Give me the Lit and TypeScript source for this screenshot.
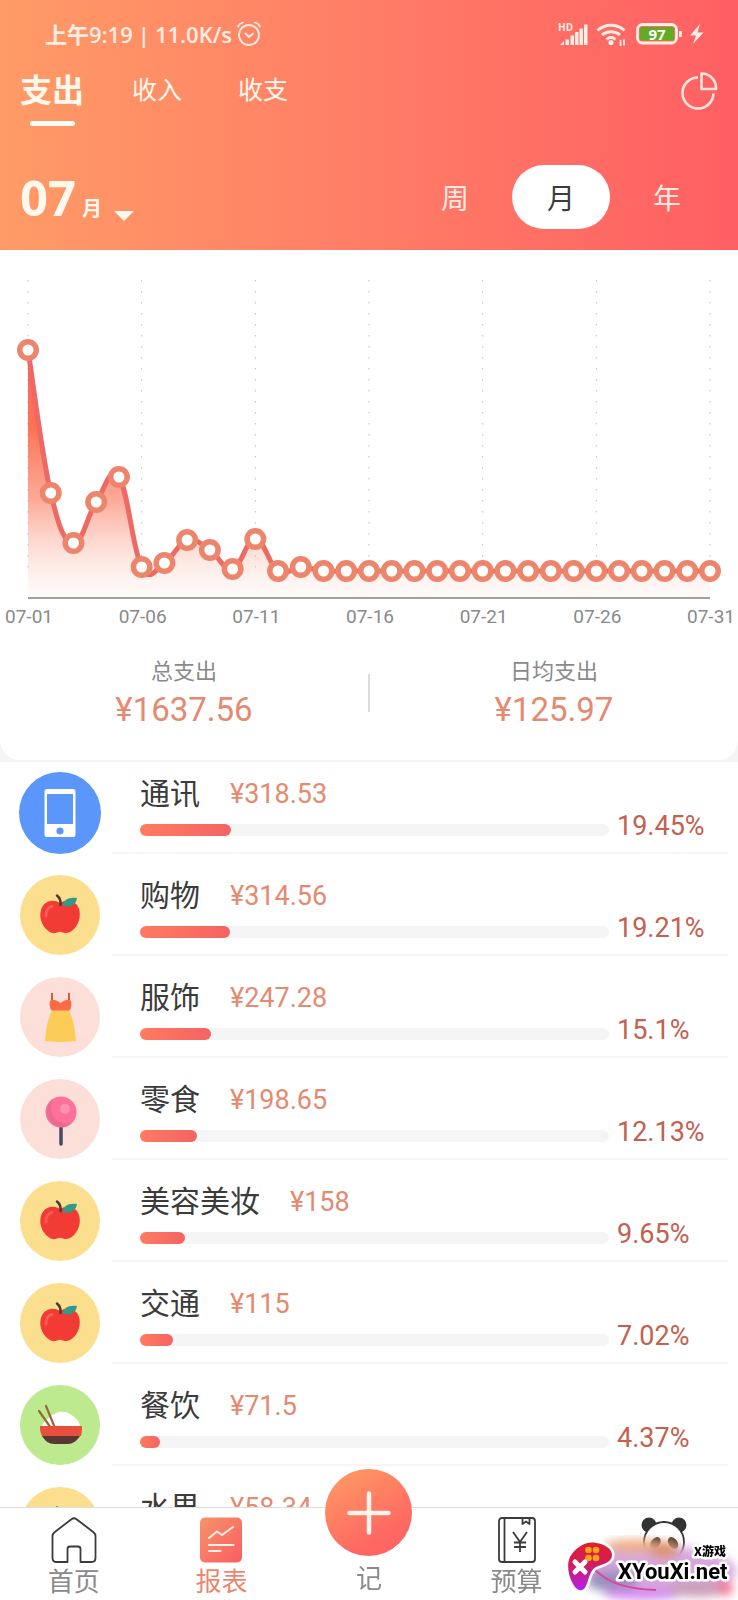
import { LitElement, html, svg, css } from "lit";
import { customElement, property, state } from "lit/decorators.js";
import { classMap } from "lit/directives/class-map.js";
import { styleMap } from "lit/directives/style-map.js";

type IconName = "phone" | "apple" | "dress" | "candy" | "bowl";

interface Category {
  name: string;
  amount: string;
  percent: number;
  icon: IconName;
}

const CATEGORIES: Category[] = [
  { name: "通讯", amount: "318.53", percent: 19.45, icon: "phone" },
  { name: "购物", amount: "314.56", percent: 19.21, icon: "apple" },
  { name: "服饰", amount: "247.28", percent: 15.1, icon: "dress" },
  { name: "零食", amount: "198.65", percent: 12.13, icon: "candy" },
  { name: "美容美妆", amount: "158", percent: 9.65, icon: "apple" },
  { name: "交通", amount: "115", percent: 7.02, icon: "apple" },
  { name: "餐饮", amount: "71.5", percent: 4.37, icon: "bowl" },
  { name: "水果", amount: "58.34", percent: 3.56, icon: "apple" },
];

// Height of each day's point above the zero line, in chart units.
const DAILY = [221, 78, 28, 69, 94, 4, 8, 31, 21, 2, 32, 0, 4].concat(Array(18).fill(0));

@customElement("status-bar")
class StatusBar extends LitElement {
  static styles = css`
    :host {
      display: flex;
      align-items: center;
      justify-content: space-between;
      height: 68px;
      padding: 0 34px 0 45px;
      color: #ffeee4;
    }
    .left,
    .right {
      display: flex;
      align-items: center;
    }
    .left {
      gap: 5px;
      font: 600 22px/30px "Open Sans", "Noto Sans CJK SC", sans-serif;
    }
    .right {
      gap: 8px;
    }
    svg {
      display: block;
    }
    .tiny {
      font: 700 10px "Open Sans", sans-serif;
    }
    .level {
      font: 700 15px "Open Sans", sans-serif;
    }
  `;
  render() {
    return html`
      <div class="left">
        <span>上午9:19</span><span>|</span><span>11.0K/s</span>
        <svg width="24" height="26" viewBox="0 0 24 26" fill="none" stroke="currentColor" stroke-width="1.8" stroke-linecap="round">
          <circle cx="12" cy="14" r="10" />
          <path d="M1 5.5C2 3.500 4 2 6 1.500M23 5.500C22 3.500 20 2 18 1.500M8.500 12.500l3.500 3.500 4-3.500" />
        </svg>
      </div>
      <div class="right">
        <svg width="30" height="26" viewBox="0 0 30 26" fill="currentColor">
          <text class="tiny" x="0" y="10">HD</text>
          <path d="M2 24l4-4v4zM7.500 18.500h3.500V24H7.500zM12.500 14.500h3.500V24h-3.500zM17 11h3.500v13H17zM21.500 7.500H25V24h-3.500zM26 3.500h3.500V24H26z" />
        </svg>
        <svg width="30" height="26" viewBox="0 0 30 26" fill="none" stroke="currentColor" stroke-width="3">
          <path d="M1.500 9.500C9 2.500 21 2.500 28.500 9.500M6 14c5-4.500 13-4.500 18 0M10.500 18.300c3-2.400 6-2.400 9 0" />
          <circle cx="15" cy="21.500" r="2.600" fill="currentColor" stroke="none" />
          <path d="M24.500 19v6M28 18.500v6" stroke-width="1.800" />
        </svg>
        <svg width="48" height="26" viewBox="0 0 48 26">
          <rect x="3.500" y="3.500" width="39" height="18.500" rx="5" fill="#ff6a64" stroke="currentColor" stroke-width="2.800" />
          <rect x="6" y="6" width="34" height="13.500" rx="2" fill="#62ab22" />
          <text class="level" x="23" y="18.500" text-anchor="middle" fill="#fff">97</text>
          <path d="M45 10h2.800v6H45z" fill="currentColor" />
        </svg>
        <svg width="14" height="22" viewBox="0 0 14 22" fill="currentColor">
          <path d="M10 1L0 12.500h6L3 21l10.500-11.500H7.500z" />
        </svg>
      </div>
    `;
  }
}

@customElement("spend-chart")
class SpendChart extends LitElement {
  static styles = css`
    :host {
      display: block;
    }
    svg {
      display: block;
      width: 100%;
      height: auto;
    }
    .tick {
      font: 400 19px Roboto, sans-serif;
      fill: #8a8a8a;
    }
    .grid {
      stroke: #bdbdbd;
      stroke-dasharray: 1.500 9.500;
    }
    .axis {
      stroke: #808080;
      stroke-width: 1.500;
    }
    .line {
      fill: none;
      stroke: #ee6864;
      stroke-width: 5;
    }
    .dot {
      fill: #fff;
      stroke: #ec856b;
      stroke-width: 5.500;
    }
  `;

  private curve(pts: number[][]) {
    const k = 0.2;
    const at = (i: number) => pts[Math.max(0, Math.min(pts.length - 1, i))];
    let d = `M${pts[0].join(" ")}`;
    for (let i = 1; i < pts.length; i++) {
      const [pp, p, c, n] = [at(i - 2), at(i - 1), at(i), at(i + 1)];
      d += `C${p[0] + (c[0] - pp[0]) * k} ${p[1] + (c[1] - pp[1]) * k} ${c[0] - (n[0] - p[0]) * k} ${c[1] - (n[1] - p[1]) * k} ${c[0]} ${c[1]}`;
    }
    return d;
  }

  render() {
    const left = 28;
    const right = 710;
    const zero = 321;
    const base = 348;
    const step = (right - left) / (DAILY.length - 1);
    const pts = DAILY.map((v, i) => [left + i * step, zero - v]);
    const line = this.curve(pts);
    const ticks = [1, 6, 11, 16, 21, 26, 31];
    return html`
      <svg viewBox="0 0 738 385" role="img" aria-label="07月每日支出">
        <defs>
          <linearGradient id="area" gradientUnits="userSpaceOnUse" x1="0" y1="100" x2="0" y2=${base}>
            <stop offset="0" stop-color="#ff5f5f" />
            <stop offset="0.320" stop-color="#ff7458" />
            <stop offset="0.600" stop-color="#fb9a84" stop-opacity="0.850" />
            <stop offset="1" stop-color="#fbd9d0" stop-opacity="0.100" />
          </linearGradient>
        </defs>
        ${ticks.map((t) => svg`<line class="grid" x1=${left + (t - 1) * step} x2=${left + (t - 1) * step} y1="30" y2=${zero} />`)}
        <path d="${line}L${right} ${base}L${left} ${base}Z" fill="url(#area)" />
        <path class="line" d=${line} />
        <line class="axis" x1=${left} x2=${right} y1=${base} y2=${base} />
        ${pts.map(([x, y]) => svg`<circle class="dot" cx=${x} cy=${y} r="8.250" />`)}
        ${ticks.map(
          (t) => svg`<text class="tick" x=${left + (t - 1) * step + 1} y="373" text-anchor="middle">07-${String(t).padStart(2, "0")}</text>`
        )}
      </svg>
    `;
  }
}

const ICONS = {
  phone: svg`
    <circle cx="41" cy="41" r="41" fill="#5b97fb" />
    <rect x="25.500" y="17" width="31" height="48" rx="2.500" fill="#fff" />
    <rect x="28" y="22" width="26" height="30" fill="#5b97fb" />
    <circle cx="41" cy="59" r="3.600" fill="#5b97fb" />`,
  apple: svg`
    <circle cx="41" cy="41" r="40" fill="#fcde8f" />
    <path d="M41 29c-6-4-13-2.500-16.500 2-5.500 7-3.500 18 2.500 24 4 4 8 5 11 3.500 2-1 4-1 6 0 3.500 1.500 7.500 0 11-3.500 6-6 8-17 3-24-3.500-4.500-11-6-17-2z" fill="#f33b36" />
    <path d="M27 42c-.500-5 2-9 6-9.500" fill="none" stroke="#fa5b52" stroke-width="3" stroke-linecap="round" />
    <path d="M41.500 31c.500-4-1-7.500-3.500-9.500" fill="none" stroke="#4a3b33" stroke-width="2.500" stroke-linecap="round" />
    <path d="M44 32c0-6 5-9 14-8-1 7-7 10-14 8z" fill="#349a86" />`,
  dress: svg`
    <circle cx="41" cy="41" r="40" fill="#fddfda" />
    <path d="M33 17v9M50 17v9" stroke="#e0563c" stroke-width="2" />
    <path d="M31 25c2-2 5-2 10.500 2 5.500-4 8.500-4 10.500-2 1 4 0 8-2 10H33c-2-2-3-6-2-10z" fill="#fb6b48" />
    <path d="M33 34.500h17c4 8 6 18 7 30.500q-16 2-31 0c1-13 3-22.500 7-30.500z" fill="#fccc58" />`,
  candy: svg`
    <circle cx="41" cy="41" r="40" fill="#fddfda" />
    <path d="M42 48v18" stroke="#474a63" stroke-width="3.500" stroke-linecap="round" />
    <circle cx="42" cy="34" r="15.500" fill="#fb7199" />
    <path d="M34 21c-7 5-8 16-2 23 6 6 15 7 21 1-15 3-25-8-19-24z" fill="#ec6a8f" />
    <circle cx="46" cy="31" r="5" fill="#fd92b3" />`,
  bowl: svg`
    <circle cx="41" cy="41" r="40" fill="#bdea8e" />
    <path d="M23 43c1-6 5-7 8-10 5-5 14-7 20-3 5 3 10 7 10 13z" fill="#fff" />
    <path d="M20 27l12 17M27 22l9 22" stroke="#96693c" stroke-width="2.200" stroke-linecap="round" />
    <path d="M21 42h42c0 3 0 6-1 10H23c-2-4-2-7-2-10z" fill="#e8503e" />
    <path d="M23 52h38c-3 5-8 8-12 8H35c-5 0-9-3-12-8z" fill="#5b3633" />`,
};

@customElement("category-row")
class CategoryRow extends LitElement {
  @property({ attribute: false }) item!: Category;

  static styles = css`
    :host {
      display: grid;
      grid-template-columns: 82px 1fr;
      column-gap: 11px;
      height: 82px;
      padding: 0 10px 0 19px;
    }
    .icon {
      display: block;
      width: 82px;
      height: 82px;
    }
    .body {
      display: grid;
      grid-template-columns: 1fr 111px;
      grid-template-rows: 42px 22px;
      column-gap: 8px;
      padding-left: 28px;
      border-bottom: 2px solid #f6f6f6;
    }
    .head {
      grid-column: 1 / -1;
      display: flex;
      align-items: flex-start;
      gap: 30px;
      white-space: nowrap;
    }
    .name {
      font-size: 30px;
      line-height: 38px;
      color: #3b3b3b;
    }
    .amount {
      font: 400 27px/44px Roboto, sans-serif;
      color: #e58a70;
    }
    .track {
      align-self: end;
      height: 12px;
      border-radius: 6px;
      background: #f5f5f5;
    }
    .fill {
      height: 100%;
      border-radius: 6px;
      background: linear-gradient(90deg, #ff7b60, #f46363);
    }
    .percent {
      font: 400 27px/24px Roboto, sans-serif;
      color: #c4604d;
    }
  `;

  render() {
    const { name, amount, percent, icon } = this.item;
    return html`
      <svg class="icon" viewBox="0 0 82 82" aria-hidden="true">${ICONS[icon]}</svg>
      <div class="body">
        <div class="head">
          <span class="name">${name}</span>
          <span class="amount">¥${amount}</span>
        </div>
        <div class="track"><div class="fill" style=${styleMap({ width: `${percent}%` })}></div></div>
        <span class="percent">${percent}%</span>
      </div>
    `;
  }
}

@customElement("site-badge")
class SiteBadge extends LitElement {
  static styles = css`
    :host {
      display: block;
      pointer-events: none;
    }
    svg {
      display: block;
    }
    .site {
      font: 700 22px Roboto, sans-serif;
    }
    .tag {
      font: 900 12px "Noto Sans CJK SC", sans-serif;
    }
    .site,
    .tag {
      fill: #000;
      stroke: #fff;
      stroke-width: 5;
      stroke-linejoin: round;
      paint-order: stroke;
    }
  `;
  render() {
    return html`
      <svg width="178" height="65" viewBox="0 0 178 65" role="img" aria-label="XYouXi.net">
        <defs>
          <filter id="soft" x="-30%" y="-60%" width="160%" height="220%"><feGaussianBlur stdDeviation="5" /></filter>
          <linearGradient id="pad" x1="0" y1="0" x2="0" y2="1">
            <stop offset="0" stop-color="#e01f30" />
            <stop offset="0.450" stop-color="#d01d5c" />
            <stop offset="1" stop-color="#b51df0" />
          </linearGradient>
        </defs>
        <g filter="url(#soft)">
          <ellipse cx="100" cy="36" rx="76" ry="25" fill="#d6a8dc" />
          <ellipse cx="76" cy="11" rx="32" ry="7" fill="#eeb08a" />
          <ellipse cx="104" cy="15" rx="15" ry="9" fill="#dc9472" />
          <ellipse cx="52" cy="46" rx="26" ry="11" fill="#8c86b8" opacity="0.800" />
          <ellipse cx="84" cy="59" rx="40" ry="6" fill="#d58cf0" />
          <ellipse cx="138" cy="54" rx="30" ry="8" fill="#c9a0b8" />
          <ellipse cx="165" cy="53" rx="8" ry="8" fill="#f27a98" />
        </g>
        <path d="M34 34c14 14 32 20 62 21" fill="none" stroke="#d8489c" stroke-width="2" />
        <path d="M10 22C16 12 26 6 36 8c9 1 16 6 16 12 0 8-10 9-16 12-9 5-7 21-14 23C14 58 4 34 10 22z" fill="url(#pad)" stroke="#fff" stroke-width="5" paint-order="stroke" />
        <g fill="#ffa318">
          <circle cx="28.500" cy="15" r="3.300" /><circle cx="36" cy="15" r="3.300" />
          <circle cx="28.500" cy="23" r="3.300" /><circle cx="36" cy="23" r="3.300" />
        </g>
        <path d="M15 27l10 10M25 27l-10 10" stroke="#fff" stroke-width="5" stroke-linecap="round" />
        <text class="tag" x="134" y="21">X游戏</text>
        <text class="site" x="58" y="44">XYouXi.net</text>
      </svg>
    `;
  }
}

@customElement("app-root")
class AppRoot extends LitElement {
  @state() private tab = "支出";
  @state() private span = "月";

  static styles = css`
    :host {
      display: flex;
      flex-direction: column;
      position: relative;
      height: 100vh;
      background: #fff;
      font-family: "Noto Sans CJK SC", sans-serif;
    }
    button {
      border: 0;
      padding: 0;
      background: none;
      color: inherit;
      font: inherit;
      cursor: pointer;
    }
    svg {
      display: block;
    }
    header {
      flex: none;
      color: #fff8ec;
      background: linear-gradient(90deg, #ff9b66, #ff7e66 48%, #ff5f63);
    }
    .tabs {
      display: flex;
      align-items: flex-start;
      padding: 0 20px;
    }
    .tab-list {
      display: flex;
      flex: 1;
      gap: 56px;
    }
    .tab {
      display: flex;
      flex-direction: column;
      align-items: center;
      gap: 13px;
      height: 58px;
      font-size: 25px;
      line-height: 40px;
      white-space: nowrap;
    }
    .tab.active {
      margin-right: -8px;
      font-size: 32px;
      font-weight: 700;
    }
    .tab.active::after {
      content: "";
      width: 45px;
      height: 5px;
      border-radius: 3px;
      background: #fffdf5;
    }
    .pie {
      padding: 3px 0;
    }
    .range {
      display: flex;
      align-items: center;
      justify-content: space-between;
      padding: 39px 22px 21px 20px;
    }
    .month {
      display: flex;
      align-items: baseline;
      height: 64px;
    }
    .month-number {
      font: 700 49px/64px "Open Sans", sans-serif;
    }
    .month-unit {
      margin: 0 12px 0 6px;
      font-size: 20px;
      font-weight: 700;
      line-height: 24px;
    }
    .caret {
      align-self: flex-end;
      margin-bottom: 8px;
    }
    .spans {
      display: flex;
      gap: 8px;
    }
    .span {
      width: 98px;
      height: 64px;
      border-radius: 32px;
      font-size: 28px;
      line-height: 64px;
      color: #ffeae4;
    }
    .span.active {
      background: #fff;
      color: #3b3b3b;
    }
    main {
      flex: 1;
      min-height: 0;
      overflow-y: auto;
      scrollbar-width: none;
      background: #f5f5f5;
    }
    .overview {
      margin-bottom: 2px;
      background: #fff;
      border-radius: 0 0 20px 20px;
    }
    .totals {
      display: grid;
      grid-template-columns: 1fr 2px 1fr;
      align-items: center;
      padding: 20px 0 30px;
    }
    .divider {
      height: 38px;
      background: #dcdcdc;
    }
    .total {
      display: flex;
      flex-direction: column;
      align-items: center;
      gap: 7px;
    }
    .total-label {
      font-size: 22px;
      line-height: 28px;
      color: #8a8a8a;
    }
    .total-value {
      font: 400 33px/40px Roboto, sans-serif;
      color: #e58a70;
    }
    .list {
      display: flex;
      flex-direction: column;
      gap: 20px;
      padding: 10px 0;
      background: #fff;
    }
    nav {
      flex: none;
      display: grid;
      grid-template-columns: repeat(5, 1fr);
      height: 92px;
      border-top: 1px solid #dedede;
      background: #fff;
      color: #8a8a8a;
    }
    .nav-item {
      display: flex;
      flex-direction: column;
      align-items: center;
      gap: 1px;
      padding-top: 9px;
      font-size: 26px;
      line-height: 32px;
    }
    .nav-item.active {
      color: #ec856b;
    }
    .nav-item.add {
      margin-top: -39px;
      gap: 5px;
      padding-top: 0;
    }
    .fab {
      display: grid;
      place-items: center;
      width: 87px;
      height: 87px;
      border-radius: 50%;
      background: linear-gradient(150deg, #ff9a64 5%, #ff6a62 70%, #ff5f63);
    }
    .badge {
      position: absolute;
      right: 0;
      bottom: 0;
    }
  `;

  private renderTab(name: string) {
    const active = this.tab === name;
    return html`<button
      role="tab"
      aria-selected=${active}
      class=${classMap({ tab: true, active })}
      @click=${() => (this.tab = name)}
    >${name}</button>`;
  }

  private renderSpan(name: string) {
    const active = this.span === name;
    return html`<button
      aria-pressed=${active}
      class=${classMap({ span: true, active })}
      @click=${() => (this.span = name)}
    >${name}</button>`;
  }

  render() {
    return html`
      <header>
        <status-bar></status-bar>
        <div class="tabs">
          <div class="tab-list" role="tablist">${["支出", "收入", "收支"].map((t) => this.renderTab(t))}</div>
          <button class="pie" aria-label="饼图">
            <svg width="38" height="40" viewBox="0 0 38 40" fill="none" stroke="#ffe6dc" stroke-width="2.600">
              <path d="M18 6.500a15.500 15.500 0 1 0 15.500 16" />
              <path d="M21.500 2.500A14.500 14.500 0 0 1 36 18H21.500z" stroke-linejoin="round" />
            </svg>
          </button>
        </div>
        <div class="range">
          <button class="month" aria-label="选择月份">
            <span class="month-number">07</span>
            <span class="month-unit">月</span>
            <svg class="caret" width="20" height="10" viewBox="0 0 20 10" fill="currentColor"><path d="M0 0h20L10 10z" /></svg>
          </button>
          <div class="spans">${["周", "月", "年"].map((s) => this.renderSpan(s))}</div>
        </div>
      </header>

      <main>
        <section class="overview">
          <spend-chart></spend-chart>
          <div class="totals">
            <div class="total">
              <span class="total-label">总支出</span>
              <span class="total-value">¥1637.56</span>
            </div>
            <div class="divider"></div>
            <div class="total">
              <span class="total-label">日均支出</span>
              <span class="total-value">¥125.97</span>
            </div>
          </div>
        </section>
        <section class="list">${CATEGORIES.map((c) => html`<category-row .item=${c}></category-row>`)}</section>
      </main>

      <nav>
        <button class="nav-item">
          <svg width="46" height="46" viewBox="0 0 46 46" fill="none" stroke="#3b3b3b" stroke-width="1.800" stroke-linejoin="round">
            <path d="M20.500 2.200a4 4 0 0 1 5 0l17 13q2 1.500 2 4V41q0 4-4 4H29.500V32q0-2.500-2.500-2.500h-8q-2.500 0-2.500 2.500v13H5.500q-4 0-4-4V19.200q0-2.500 2-4z" />
          </svg>
          <span>首页</span>
        </button>
        <button class="nav-item active">
          <svg width="46" height="46" viewBox="0 0 46 46" fill="none" stroke="#fff0e8" stroke-width="2" stroke-linecap="round" stroke-linejoin="round">
            <defs>
              <linearGradient id="report" x1="0" y1="0" x2="1" y2="1">
                <stop offset="0" stop-color="#f5946a" /><stop offset="1" stop-color="#fb5d62" />
              </linearGradient>
            </defs>
            <rect x="2" y="0.500" width="42" height="45" rx="5" fill="url(#report)" stroke="none" />
            <path d="M11 21l8-6.500 5 3.500L35 10M11 28h24.500M11 34h11.500" />
          </svg>
          <span>报表</span>
        </button>
        <button class="nav-item add">
          <span class="fab">
            <svg width="44" height="44" viewBox="0 0 44 44" stroke="#fff4ec" stroke-width="4.500" stroke-linecap="round">
              <path d="M22 2.500v39M2.500 22h39" />
            </svg>
          </span>
          <span>记</span>
        </button>
        <button class="nav-item">
          <svg width="46" height="46" viewBox="0 0 46 46" fill="none" stroke="#3b3b3b" stroke-width="1.800" stroke-linejoin="round">
            <rect x="5" y="1" width="36" height="44" rx="3" />
            <path d="M10.500 1v44M28.500 1v6l3.500-2.500L35.500 7V1" />
            <path d="M19 15l7 10 7-10M26 25v10M20 25.500h12M20 30h12" />
          </svg>
          <span>预算</span>
        </button>
        <button class="nav-item" aria-label="我的">
          <svg width="46" height="46" viewBox="0 0 46 46">
            <circle cx="8" cy="8" r="7.500" fill="#333" />
            <circle cx="38" cy="8" r="7.500" fill="#333" />
            <ellipse cx="23" cy="25" rx="20" ry="20" fill="#fff" stroke="#333" stroke-width="1.800" />
            <ellipse cx="14.500" cy="26" rx="4.500" ry="6.500" transform="rotate(35 14.500 26)" fill="#333" />
            <ellipse cx="32" cy="26" rx="4.500" ry="6.500" transform="rotate(-35 32 26)" fill="#4a4230" />
          </svg>
        </button>
      </nav>
      <site-badge class="badge"></site-badge>
    `;
  }
}
